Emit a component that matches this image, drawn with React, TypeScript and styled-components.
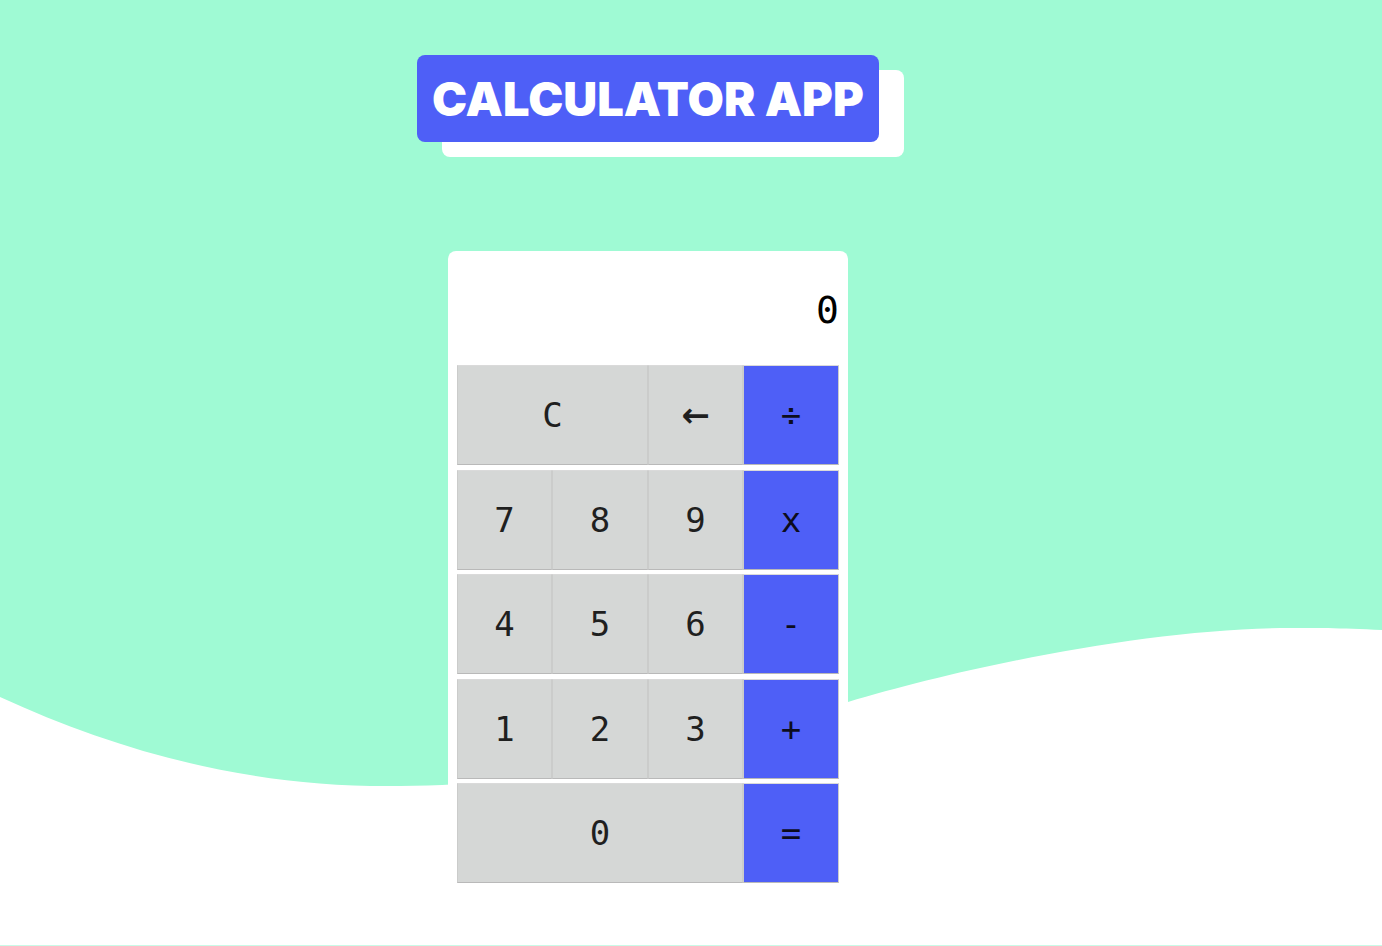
import React from "react";
import styled, { createGlobalStyle } from "styled-components";

const GlobalStyle = createGlobalStyle`
  html, body {
    margin: 0;
    padding: 0;
  }
  body {
    background: #c9fbe7;
    font-family: "DejaVu Sans Mono", monospace;
    overflow: hidden;
  }
`;

const MINT = "#9ffad4";
const BLUE = "#4e5ff7";
const GRAY = "#d5d7d6";

const Page = styled.div`
  position: relative;
  height: 945px;
  background: #ffffff;
  overflow: hidden;
`;

const Wave = styled.svg`
  position: absolute;
  inset: 0;
  width: 1382px;
  height: 945px;
  z-index: 0;
`;

const Content = styled.main`
  position: relative;
  z-index: 1;
  display: flex;
  flex-direction: column;
  align-items: center;
  padding: 55px 86px 0 0;
`;

const Title = styled.h1`
  margin: 0;
  width: 462px;
  height: 87px;
  box-sizing: border-box;
  display: flex;
  align-items: center;
  padding-left: 15px;
  background: ${BLUE};
  border-radius: 8px;
  box-shadow: 25px 15px 0 #ffffff;
  color: #ffffff;
  font-family: Inter, "Noto Sans", sans-serif;
  font-weight: 900;
  font-size: 47px;
  letter-spacing: 0px;
  white-space: nowrap;
`;

const Card = styled.section`
  margin-top: 109px;
  width: 400px;
  box-sizing: border-box;
  background: #ffffff;
  border-radius: 8px;
  padding: 0 9px 10px;
`;

const Display = styled.div`
  height: 114px;
  display: flex;
  align-items: center;
  justify-content: flex-end;
  padding: 4px 0 0;
  box-sizing: border-box;
  font-family: "DejaVu Sans Mono", "Liberation Mono", monospace;
  font-size: 38px;
  color: #000;
`;

const Keys = styled.div`
  display: flex;
  flex-direction: column;
  gap: 4.5px;
`;

const Row = styled.div`
  display: grid;
  grid-template-columns: 95px 96px 95px 96px;
  width: 382px;
`;

const Key = styled.button<{ $span?: number; $op?: boolean; $symbol?: boolean }>`
  grid-column: span ${(p) => p.$span ?? 1};
  height: 100px;
  margin: 0;
  padding: 0;
  border: 1px solid #cbcccb;
  border-bottom: 1px solid #b9b9b9;
  border-top-color: #dadada;
  background: ${(p) => (p.$op ? BLUE : GRAY)};
  color: ${(p) => (p.$op ? "#0c0c1e" : "#1f1f1f")};
  font-family: ${(p) =>
    p.$symbol ? `"DejaVu Sans", sans-serif` : `"DejaVu Sans Mono", "Liberation Mono", monospace`};
  font-weight: ${(p) => (p.$symbol ? 700 : 400)};
  font-size: 34px;
  display: flex;
  align-items: center;
  justify-content: center;
  cursor: pointer;
`;

const rows: { label: string; span?: number; op?: boolean; symbol?: boolean }[][] = [
  [{ label: "C", span: 2 }, { label: "←", symbol: true }, { label: "÷", op: true }],
  [{ label: "7" }, { label: "8" }, { label: "9" }, { label: "x", op: true }],
  [{ label: "4" }, { label: "5" }, { label: "6" }, { label: "-", op: true }],
  [{ label: "1" }, { label: "2" }, { label: "3" }, { label: "+", op: true }],
  [{ label: "0", span: 3 }, { label: "=", op: true }],
];

export default function App() {
  return (
    <>
      <GlobalStyle />
      <Page>
        <Wave viewBox="0 0 1382 945" preserveAspectRatio="none">
          <path
            fill={MINT}
            d="M0 0 H1382 V630 C1340 628 1310 628 1290 628 C1150 628 960 668 848 702 C700 742 560 786 400 786 C250 788 120 752 0 697 Z"
          />
        </Wave>
        <Content>
          <Title>CALCULATOR APP</Title>
          <Card>
            <Display>0</Display>
            <Keys>
              {rows.map((row, i) => (
                <Row key={i}>
                  {row.map((k) => (
                    <Key key={k.label} $span={k.span} $op={k.op} $symbol={k.symbol}>
                      {k.label}
                    </Key>
                  ))}
                </Row>
              ))}
            </Keys>
          </Card>
        </Content>
      </Page>
    </>
  );
}
